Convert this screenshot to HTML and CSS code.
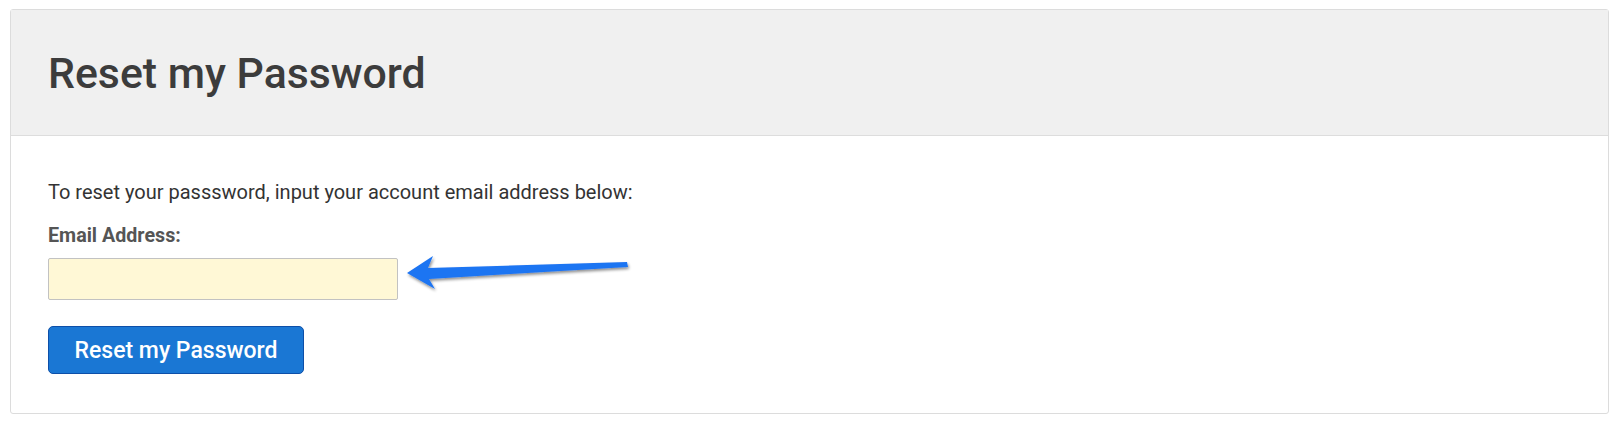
FILE: index.html
```html
<!DOCTYPE html>
<html lang="en">
<head>
<meta charset="utf-8">
<title>Reset my Password</title>
<link rel="stylesheet" href="styles.css">
</head>
<body>
<div class="card">
  <div class="card-header">
    <h1 class="title">Reset my Password</h1>
  </div>
  <div class="card-body">
    <p class="intro">To reset your passsword, input your account email address below:</p>
    <label class="label" for="email">Email Address:</label>
    <div class="field-row">
      <input class="input" id="email" type="text">
      <svg class="arrow" width="240" height="50" viewBox="0 0 240 50" aria-hidden="true">
        <defs>
          <filter id="sh" x="-10%" y="-30%" width="120%" height="180%">
            <feGaussianBlur in="SourceAlpha" stdDeviation="1.5"/>
            <feOffset dx="1" dy="2" result="b"/>
            <feComponentTransfer><feFuncA type="linear" slope="0.45"/></feComponentTransfer>
            <feMerge><feMergeNode/><feMergeNode in="SourceGraphic"/></feMerge>
          </filter>
        </defs>
        <polygon filter="url(#sh)" fill="#1f74f2" points="2,24 28,7 23,19 222,13 223,18 24,30 30,40"/>
      </svg>
    </div>
    <button class="btn" type="button">Reset my Password</button>
  </div>
</div>
</body>
</html>
```
FILE: styles.css
```css
html, body {
  margin: 0;
  padding: 0;
  background: #ffffff;
}
body {
  padding: 9px 9px 8px 10px;
  font-family: Roboto, "Liberation Sans", Arial, sans-serif;
}
.card {
  border: 1px solid #dcdcdc;
  border-radius: 3px;
  background: #fff;
  box-sizing: border-box;
  height: 405px;
}
.card-header {
  background: #f0f0f0;
  border-bottom: 1px solid #dddddd;
  height: 125px;
  display: flex;
  align-items: center;
  padding-left: 37px;
}
.title {
  margin: 0;
  font-size: 42.8px;
  font-weight: 500;
  color: #3c3c3c;
}
.card-body {
  padding: 44px 37px 0 37px;
}
.intro {
  margin: 0;
  font-size: 20px;
  color: #333;
  line-height: 24px;
}
.label {
  display: block;
  margin-top: 20px;
  font-size: 19.7px;
  font-weight: 700;
  color: #555;
  line-height: 24px;
}
.field-row {
  position: relative;
  margin-top: 10px;
  height: 42px;
}
.input {
  display: block;
  box-sizing: border-box;
  width: 350px;
  height: 42px;
  margin: 0;
  border: 1px solid #c2c2c2;
  border-radius: 2px;
  background: #fff8d6;
  outline: none;
}
.arrow {
  position: absolute;
  left: 357px;
  top: -9px;
}
.btn {
  display: block;
  margin-top: 26px;
  box-sizing: border-box;
  width: 256px;
  height: 48px;
  border: 1px solid #0d4fa8;
  border-radius: 5px;
  background: #1a77d4;
  color: #fff;
  font-family: Roboto, "Liberation Sans", Arial, sans-serif;
  font-size: 23px;
  font-weight: 500;
  padding: 0;
}
```
